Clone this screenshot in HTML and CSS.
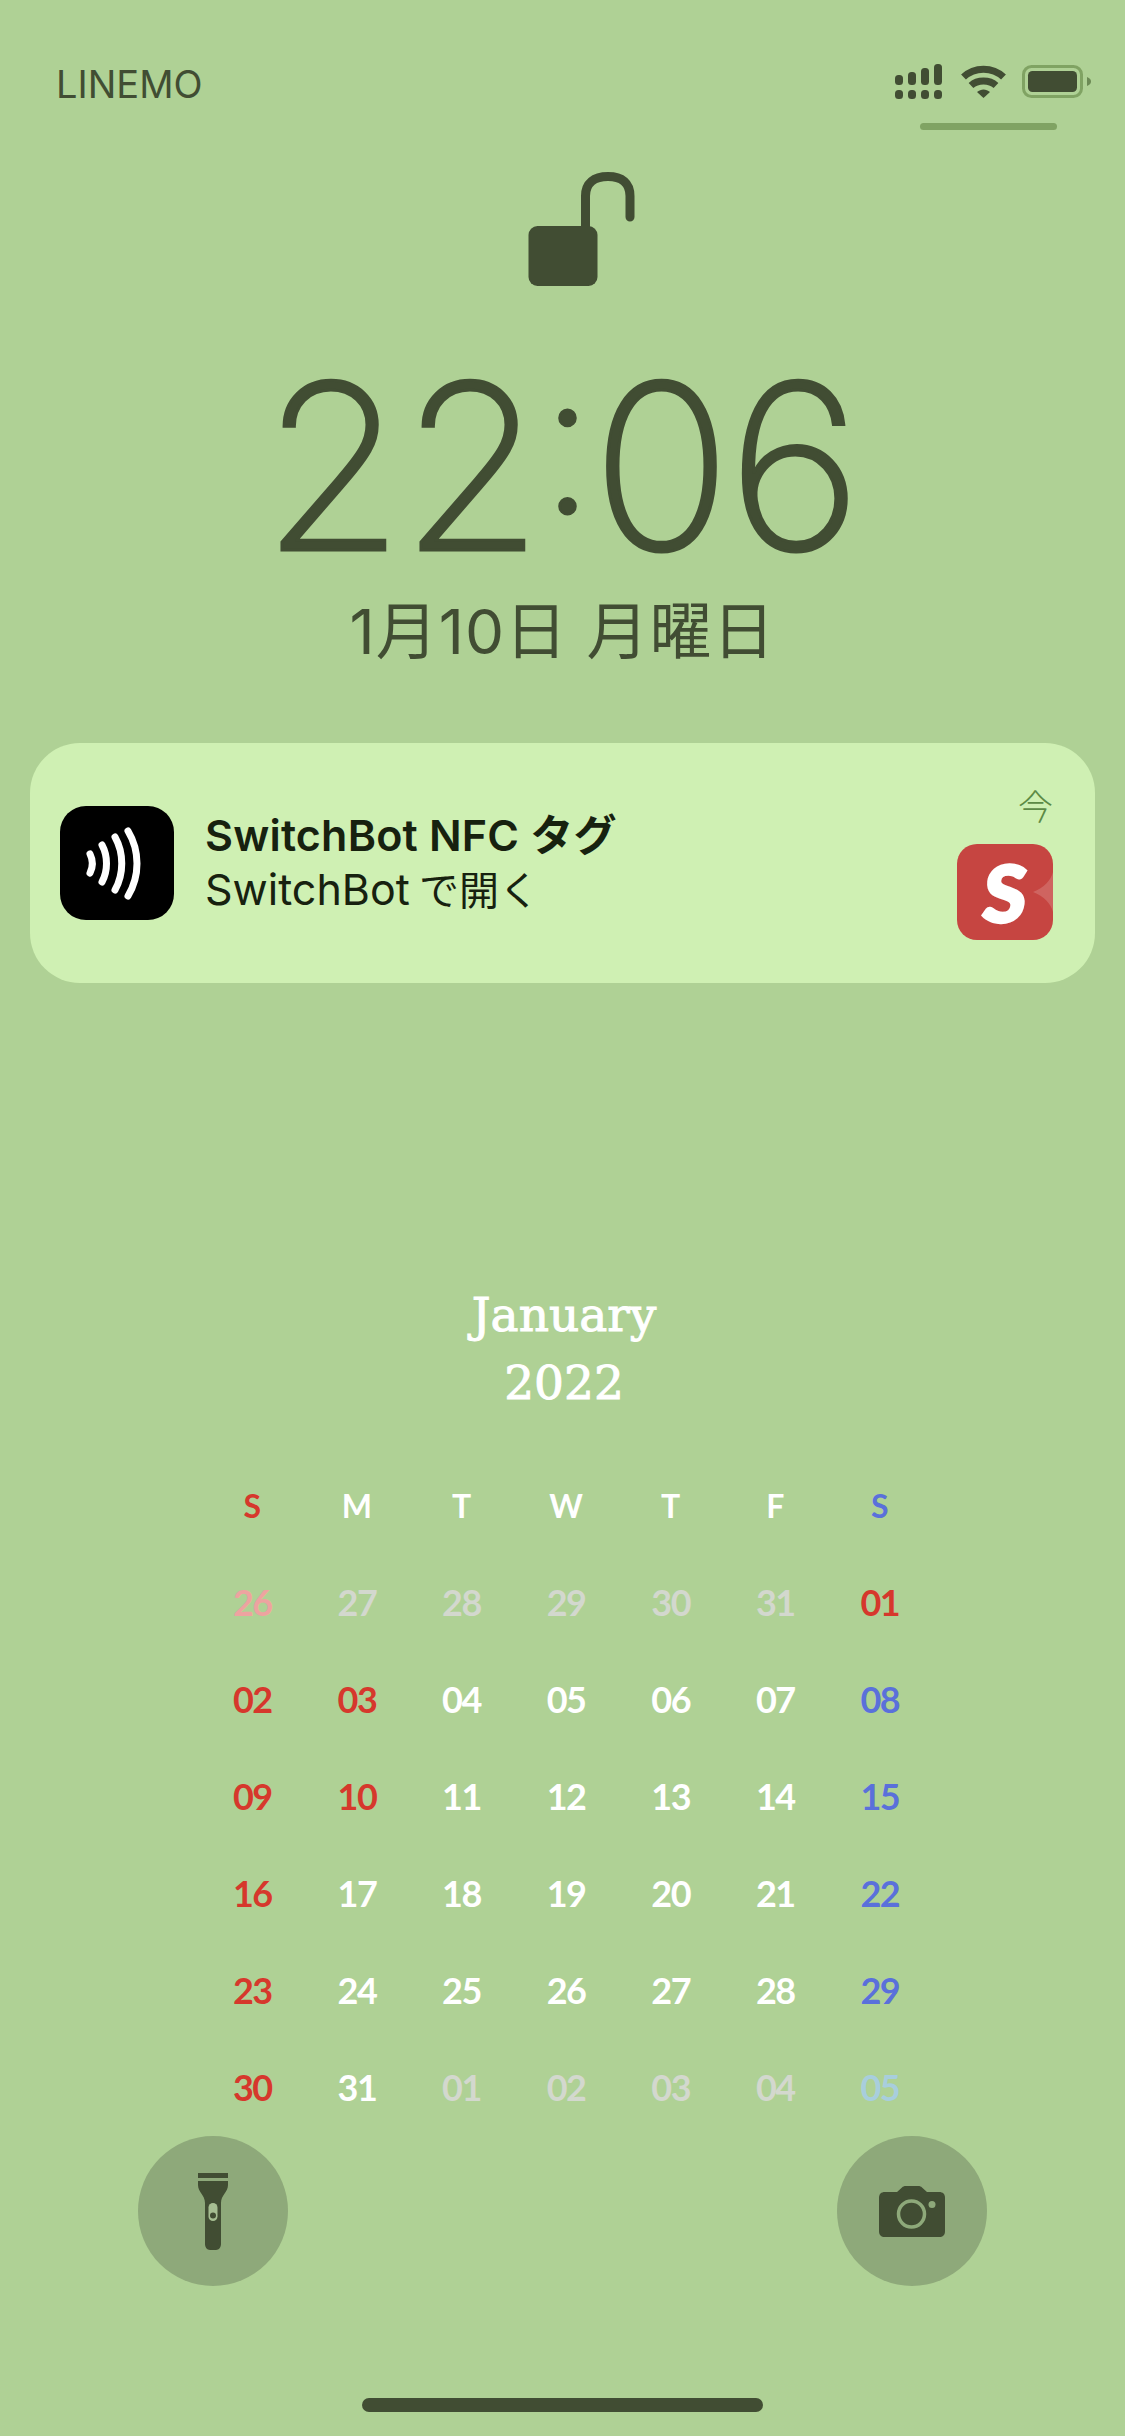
FILE: index.html
```html
<!DOCTYPE html>
<html lang="ja">
<head>
  <meta charset="UTF-8">
  <meta name="viewport" content="width=device-width, initial-scale=1.0">
  <title>Lock screen</title>
  <link rel="stylesheet" href="styles.css">
</head>
<body>
  <div class="status">
    <span class="carrier">LINEMO</span>
    <div class="status-right">
      <div class="status-icons">
        <svg class="signal" width="47" height="35" viewBox="0 0 47 35" fill="#414D33">
          <rect x="0" y="11" width="8" height="10" rx="3.5"/>
          <rect x="13" y="8" width="8" height="13" rx="3.5"/>
          <rect x="26" y="4" width="8" height="17" rx="3.5"/>
          <rect x="39" y="0" width="8" height="21" rx="3.5"/>
          <rect x="0" y="26" width="8" height="9" rx="3.5"/>
          <rect x="13" y="26" width="8" height="9" rx="3.5"/>
          <rect x="26" y="26" width="8" height="9" rx="3.5"/>
          <rect x="39" y="26" width="8" height="9" rx="3.5"/>
        </svg>
        <svg class="wifi" width="45" height="33" viewBox="0 0 45 33" fill="none" stroke="#414D33" stroke-width="7">
          <path d="M2.500 12C13.500 1.500 31.500 1.500 42.500 12"/>
          <path d="M10 20.500C16.500 14.500 28.500 14.500 35 20.500"/>
          <path d="M16 27L22.500 33L29 27C25 23.500 20 23.500 16 27Z" fill="#414D33" stroke="none"/>
        </svg>
        <svg class="battery" width="69" height="33" viewBox="0 0 69 33">
          <rect x="1.500" y="1.500" width="58" height="30" rx="8" fill="none" stroke="#80A363" stroke-width="3"/>
          <rect x="6" y="6" width="49" height="21" rx="4.500" fill="#414D33"/>
          <path d="M65 12C68 13 69 15 69 16.500C69 18 68 20 65 21Z" fill="#6C8A55"/>
        </svg>
      </div>
      <div class="swipe-bar"></div>
    </div>
  </div>

  <svg class="lock" width="212" height="114" viewBox="0 0 212 114">
    <path d="M128.500 56V24C128.500 11 137 4.500 151 4.500C165 4.500 173 11 173 24V45" fill="none" stroke="#414D33" stroke-width="9" stroke-linecap="round"/>
    <rect x="71.500" y="54" width="69" height="60" rx="9" fill="#414D33"/>
  </svg>

  <div class="time">22<span class="colon">:</span>06</div>
  <div class="date">1月10日 月曜日</div>

  <div class="notice">
    <div class="app-icon">
      <svg width="114" height="114" viewBox="0 0 114 114" fill="none" stroke="#fff" stroke-width="7" stroke-linecap="round">
        <path d="M30 48C33 54 33 61 30 67"/>
        <path d="M42 39C48 50 48 65 42 76"/>
        <path d="M55 31C64 47 64 68 55 84"/>
        <path d="M68 25C80 45 80 70 68 90"/>
      </svg>
    </div>
    <div class="notice-text">
      <div class="notice-title">SwitchBot NFC タグ</div>
      <div class="notice-sub">SwitchBot <span class="notice-sub-ja">で開く</span></div>
    </div>
    <div class="notice-side">
      <span class="notice-when">今</span>
      <div class="snap-icon">
        <span class="snap-s">S</span>
        <svg class="snap-fold" width="20" height="40" viewBox="0 0 20 40">
          <path d="M20 0C18 8 11 16 0 20C11 24 18 32 20 40Z" fill="#CF6460"/>
        </svg>
      </div>
    </div>
  </div>

  <div class="calendar">
    <div class="cal-head">January<br>2022</div>
    <div class="cal-grid">
      <span class="cell sun wk">S</span><span class="cell wk">M</span><span class="cell wk">T</span><span class="cell wk">W</span><span class="cell wk">T</span><span class="cell wk">F</span><span class="cell sat wk">S</span>

      <span class="cell sun-off">26</span><span class="cell off">27</span><span class="cell off">28</span><span class="cell off">29</span><span class="cell off">30</span><span class="cell off">31</span><span class="cell sun">01</span>

      <span class="cell sun">02</span><span class="cell sun">03</span><span class="cell">04</span><span class="cell">05</span><span class="cell">06</span><span class="cell">07</span><span class="cell sat">08</span>

      <span class="cell sun">09</span><span class="cell sun">10</span><span class="cell">11</span><span class="cell">12</span><span class="cell">13</span><span class="cell">14</span><span class="cell sat">15</span>

      <span class="cell sun">16</span><span class="cell">17</span><span class="cell">18</span><span class="cell">19</span><span class="cell">20</span><span class="cell">21</span><span class="cell sat">22</span>

      <span class="cell sun">23</span><span class="cell">24</span><span class="cell">25</span><span class="cell">26</span><span class="cell">27</span><span class="cell">28</span><span class="cell sat">29</span>

      <span class="cell sun">30</span><span class="cell">31</span><span class="cell off">01</span><span class="cell off">02</span><span class="cell off">03</span><span class="cell off">04</span><span class="cell sat-off">05</span>
    </div>
  </div>

  <div class="quick">
    <div class="round-btn">
      <svg width="30" height="77" viewBox="0 0 30 77" fill="#414D33">
        <path d="M0 0H30V5H0Z"/>
        <path d="M0 8H30V12C30 19 23 22 23 30V71C23 74 21 77 18 77H12C9 77 7 74 7 71V30C7 22 0 19 0 12Z"/>
        <rect x="10.500" y="30" width="9" height="18" rx="4.500" fill="#A6BE92"/>
        <circle cx="15" cy="42.500" r="3" fill="#414D33"/>
      </svg>
    </div>
    <div class="round-btn">
      <svg width="66" height="51" viewBox="0 0 66 51">
        <path d="M6 6H18L23 1.500C24 .5 25 0 27 0H39C41 0 42 .5 43 1.500L48 6H60C64 6 66 8 66 12V45C66 49 64 51 60 51H6C2 51 0 49 0 45V12C0 8 2 6 6 6Z" fill="#414D33"/>
        <circle cx="32.500" cy="28" r="13" fill="none" stroke="#8EA97A" stroke-width="3.500"/>
        <circle cx="53" cy="18.500" r="3.500" fill="#8EA97A"/>
      </svg>
    </div>
  </div>

  <div class="home-bar"></div>
</body>
</html>
```

FILE: styles.css
```css
:root {
  --bg: #AFD195;
  --ink: #414D33;
  --card: #CFF0B3;
  --red: #D6382C;
  --blue: #5A70DB;
}

html, body {
  margin: 0;
  padding: 0;
}

body {
  width: 1125px;
  height: 2436px;
  overflow: hidden;
  background: var(--bg);
  color: var(--ink);
  font-family: Inter, "Noto Sans CJK JP", sans-serif;
  display: flex;
  flex-direction: column;
}

svg {
  display: block;
}

/* status bar */
.status {
  display: flex;
  justify-content: space-between;
  padding: 64px 34px 0 56px;
}

.carrier {
  font-size: 38px;
  line-height: 40px;
}

.status-icons {
  display: flex;
  align-items: flex-start;
  gap: 19px;
}

.wifi { margin-top: 1px; }

.battery {
  margin-left: -3px;
  margin-top: 1px;
}

.swipe-bar {
  width: 137px;
  height: 7px;
  margin: 24px 0 0 25px;
  border-radius: 4px;
  background: #80A363;
}

/* lock + clock */
.lock {
  align-self: center;
  margin-top: 42px;
}

.time {
  text-align: center;
  font-size: 230px;
  font-weight: 200;
  line-height: 200px;
  letter-spacing: -3px;
  -webkit-text-stroke: 3px var(--ink);
  padding-right: 4px;
  margin-top: 80px;
}

.colon {
  font-size: 199px;
  line-height: 0;
  vertical-align: 37px;
}

.date {
  text-align: center;
  font-size: 62px;
  line-height: 80px;
  font-weight: 400;
  letter-spacing: 1px;
  margin-top: 26px;
}

/* notification */
.notice {
  display: flex;
  margin: 71px 30px 0;
  height: 240px;
  border-radius: 50px;
  background: var(--card);
  box-sizing: border-box;
  padding: 0 42px 0 30px;
  align-items: center;
}

.app-icon {
  width: 114px;
  height: 114px;
  border-radius: 26px;
  background: #000;
  flex-shrink: 0;
}

.notice-text {
  margin-left: 31px;
  color: #17210F;
}

.notice-title {
  font-size: 43px;
  font-weight: 600;
  line-height: 54px;
  letter-spacing: .2px;
}

.notice-sub {
  font-size: 43px;
  font-weight: 400;
  line-height: 54px;
}

.notice-sub-ja {
  font-size: 40px;
  margin-left: -3px;
}

.notice-side {
  margin-left: auto;
  display: flex;
  flex-direction: column;
  align-items: flex-end;
}

.notice-when {
  font-size: 35px;
  line-height: 42px;
  color: #5C8A45;
  margin-bottom: 16px;
  font-weight: 300;
}

.snap-icon {
  position: relative;
  width: 96px;
  height: 96px;
  border-radius: 20px;
  background: #C64541;
  overflow: hidden;
  display: flex;
  align-items: center;
  justify-content: center;
}

.snap-s {
  font-family: Lato, sans-serif;
  font-weight: 900;
  font-size: 78px;
  line-height: 96px;
  color: #fff;
  -webkit-text-stroke: 3px #fff;
  transform: skewX(-6deg);
}

.snap-fold {
  position: absolute;
  right: 0;
  top: 28px;
}

/* wallpaper calendar */
.calendar {
  margin-top: 298px;
}

.cal-head {
  text-align: center;
  color: #fff;
  font-family: "DejaVu Serif", serif;
  font-size: 47px;
  line-height: 68px;
  -webkit-text-stroke: 1px #fff;
  margin-left: 3px;
}

.cal-grid {
  display: grid;
  grid-template-columns: repeat(7, 104.6px);
  grid-auto-rows: 97px;
  margin: 40px 0 0 200px;
}

.cell {
  text-align: center;
  font-family: Lato, sans-serif;
  font-weight: 700;
  font-size: 36px;
  letter-spacing: -1.5px;
  line-height: 97px;
  color: #fff;
}

.wk {
  font-size: 32px;
  letter-spacing: 0;
}

.sun { color: var(--red); }
.sat { color: var(--blue); }
.off { color: #D3D8CE; }
.sun-off { color: #EDA3A0; }
.sat-off { color: #A8CEDD; }

/* bottom buttons */
.quick {
  display: flex;
  justify-content: space-between;
  padding: 0 138px;
}

.round-btn {
  width: 150px;
  height: 150px;
  border-radius: 50%;
  background: #8EA97A;
  display: flex;
  align-items: center;
  justify-content: center;
}

.home-bar {
  align-self: center;
  width: 401px;
  height: 14px;
  border-radius: 7px;
  background: var(--ink);
  margin-top: 112px;
}
```
